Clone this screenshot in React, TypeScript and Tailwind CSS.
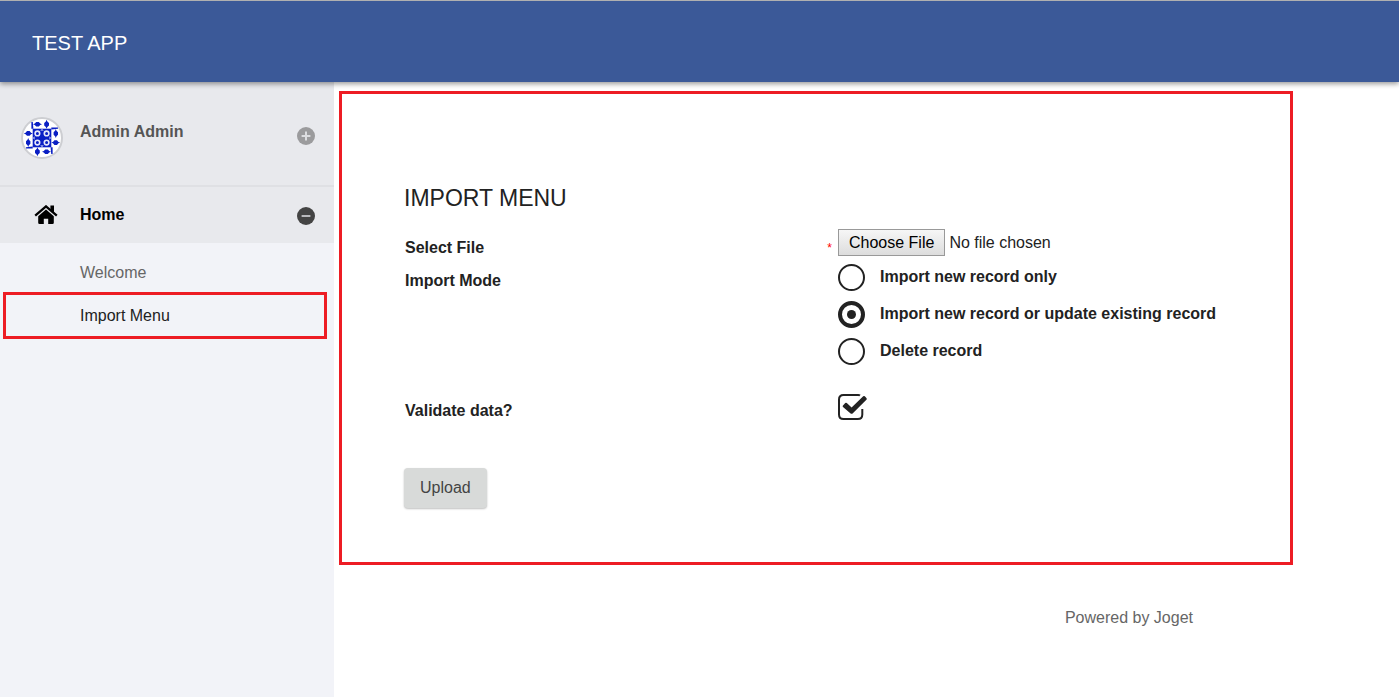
import React, { useState } from "react";

const modes = [
  { value: "new", label: "Import new record only" },
  { value: "update", label: "Import new record or update existing record" },
  { value: "delete", label: "Delete record" },
];

const Avatar = () => (
  <svg viewBox="0 0 42 42" className="size-[42px] shrink-0" aria-hidden="true">
    <circle cx="21" cy="21" r="20" fill="#fff" stroke="#cdced2" strokeWidth="2" />
    <g fill="#0a1fc4">
      <path d="M11.7 11.7h18.6v18.6H11.7z" />
      {[0, 90, 180, 270].map((angle) => (
        <g key={angle} transform={`rotate(${angle} 21 21)`}>
          <path d="M12 7.2q2-.3 3.2-2.2h2.6q1.2 1.9 3.2 2.2-2 .3-3.2 2.2h-2.6q-1.2-1.9-3.2-2.2z" />
          <path d="M25.6 2.8q.3 2 2.4 3.2v2.6q-2.1 1.2-2.4 3.2-.3-2-2.4-3.2V6q2.1-1.2 2.4-3.2z" />
          <path d="M10.4 5h1.4l.6 6.7h-2z" />
        </g>
      ))}
    </g>
    {[16.4, 25.6].map((x) =>
      [16.4, 25.6].map((y) => (
        <circle key={`${x}-${y}`} cx={x} cy={y} r="2.3" fill="#0a1fc4" stroke="#e6e8fa" strokeWidth="1.6" />
      ))
    )}
    <path d="M21 11.7l1.8 2h-3.6zM21 30.3l1.8-2h-3.6zM11.7 21l2-1.8v3.6zM30.3 21l-2-1.8v3.6z" fill="#a9b1ee" />
  </svg>
);

const HomeIcon = () => (
  <svg viewBox="0 0 24 20" className="h-5 w-6 shrink-0" aria-hidden="true">
    <path d="M16.4 .6h3.6v7l-3.6-3z" />
    <path d="M1.2 10.6L12 1.4l10.8 9.2" fill="none" stroke="#000" strokeWidth="2.3" />
    <path d="M12 4.6l7.8 6.6v6.5q0 1.3-1.3 1.3h-4.3v-5.2H9.8V19H5.5q-1.3 0-1.3-1.3v-6.5z" />
  </svg>
);

const ToggleIcon = ({ open }: { open: boolean }) => (
  <svg viewBox="0 0 18 18" className="size-[18px]" aria-hidden="true">
    <circle cx="9" cy="9" r="9" fill={open ? "#444" : "#9b9b9d"} />
    <path d={open ? "M4.6 9h8.8" : "M4.6 9h8.8M9 4.6v8.8"} stroke={open ? "#b9babd" : "#dcdde0"} strokeWidth="2" />
  </svg>
);

const CheckIcon = ({ checked }: { checked: boolean }) => (
  <svg viewBox="0 0 29 26" className="pointer-events-none absolute inset-0 h-[26px] w-[29px]" fill="none" aria-hidden="true">
    <path
      d={checked ? "M22 1.6Q21.3 1 20.2 1H5.5Q1 1 1 5.5v15Q1 25 5.5 25h14.3q4.5 0 4.5-4.5V15" : "M5.5 1h14.3q4.5 0 4.5 4.5v15q0 4.5-4.5 4.5H5.5Q1 25 1 20.5v-15Q1 1 5.5 1z"}
      stroke="#222"
      strokeWidth="2"
    />
    {checked && (
      <path
        d="M5 11.4L7.2 9q.8-.7 1.6 0l4.8 4.5L25.2 2.3q.8-.7 1.6 0l1.6 1.8q.7.8 0 1.6L14.6 19.4q-1 .8-2 0L5 12.9q-.6-.8 0-1.5z"
        fill="#222"
      />
    )}
  </svg>
);

const Sidebar = () => (
  <aside className="w-[334px] shrink-0 bg-[#f2f3f8]">
    <div className="flex h-[105px] items-start border-b-2 border-[#dfe0e4] bg-[#e8e9ed] pt-[35px] pr-[19px] pl-[21px]">
      <Avatar />
      <span className="ml-[17px] pt-[3px] font-bold text-[#555]">Admin Admin</span>
      <button type="button" aria-label="Expand profile" className="mt-2.5 ml-auto">
        <ToggleIcon open={false} />
      </button>
    </div>
    <nav>
      <div className="flex h-14 items-center bg-[#e8e9ed] pr-[19px] pl-[34px]">
        <HomeIcon />
        <a href="#home" className="ml-[22px] font-bold text-black">Home</a>
        <button type="button" aria-label="Collapse Home" className="mt-0.5 ml-auto">
          <ToggleIcon open />
        </button>
      </div>
      <ul>
        <li>
          <a href="#welcome" className="block pt-[18px] pb-[7px] pl-20 text-[#666]">Welcome</a>
        </li>
        <li>
          <a href="#import" className="mr-[7px] ml-[3px] flex h-[47px] items-center border-3 border-[#ed1c24] pl-[74px] text-[#222]">
            Import Menu
          </a>
        </li>
      </ul>
    </nav>
  </aside>
);

const App = () => {
  const [mode, setMode] = useState("update");
  const [validate, setValidate] = useState(true);

  return (
    <div className="flex min-h-screen flex-col bg-white font-['Liberation_Sans',Arial,sans-serif] text-base leading-6 text-[#222]">
      <header className="relative z-10 flex h-[82px] items-center border-t border-[#b0b0b0] bg-[#3b5998] px-8 pt-0.5 shadow-[0_2px_5px_rgba(0,0,0,0.4)]">
        <h1 className="text-xl text-white">TEST APP</h1>
      </header>
      <div className="flex flex-1">
        <Sidebar />
        <main className="min-w-0 flex-1 pt-[9px] pl-[5px]">
          <form className="mr-[106px] border-3 border-[#ed1c24] pt-[90px] pr-[18px] pb-[54px] pl-[62px]" onSubmit={(e) => e.preventDefault()}>
            <h2 className="mb-[17px] text-[23px] leading-7">IMPORT MENU</h2>
            <div className="grid grid-cols-2">
              <div className="flex justify-between pt-[7px] pr-1.5 pl-px">
                <label htmlFor="file" className="font-bold">Select File</label>
                <span className="text-xs leading-6 text-[#f00]">*</span>
              </div>
              <input
                id="file"
                type="file"
                className="h-[27px] w-full leading-[21px] file:mr-1 file:h-[27px] file:border file:border-solid file:border-[#999] file:bg-linear-to-b file:from-[#f6f6f6] file:to-[#dddddd] file:px-2.5 file:text-black"
              />
            </div>
            <fieldset className="mt-1 grid grid-cols-2" aria-labelledby="mode-label">
              <span id="mode-label" className="pt-[5px] pl-px font-bold">Import Mode</span>
              <div className="flex flex-col gap-2.5">
                {modes.map((item) => (
                  <label key={item.value} className="flex h-[27px] items-start gap-[15px] font-bold">
                    <input
                      type="radio"
                      name="mode"
                      value={item.value}
                      checked={mode === item.value}
                      onChange={() => setMode(item.value)}
                      className="grid size-[27px] shrink-0 appearance-none place-items-center rounded-full border-2 border-[#222] checked:border-4 checked:before:size-[9px] checked:before:rounded-full checked:before:bg-[#222] checked:before:content-['']"
                    />
                    <span className="pt-px">{item.label}</span>
                  </label>
                ))}
              </div>
            </fieldset>
            <div className="mt-[29px] grid grid-cols-2">
              <label htmlFor="validate" className="pt-[5px] pl-px font-bold">Validate data?</label>
              <div className="relative h-[26px] w-[29px]">
                <input
                  id="validate"
                  type="checkbox"
                  checked={validate}
                  onChange={(e) => setValidate(e.target.checked)}
                  className="block size-[26px] appearance-none"
                />
                <CheckIcon checked={validate} />
              </div>
            </div>
            <button type="submit" className="mt-[45px] block h-10 rounded-sm bg-[#d8dad9] px-4 text-[#444] shadow-[0_1px_2px_rgba(0,0,0,0.25)]">
              Upload
            </button>
          </form>
          <footer className="mt-[41px] pr-[206px] text-right text-[#666]">Powered by Joget</footer>
        </main>
      </div>
    </div>
  );
};

export default App;
